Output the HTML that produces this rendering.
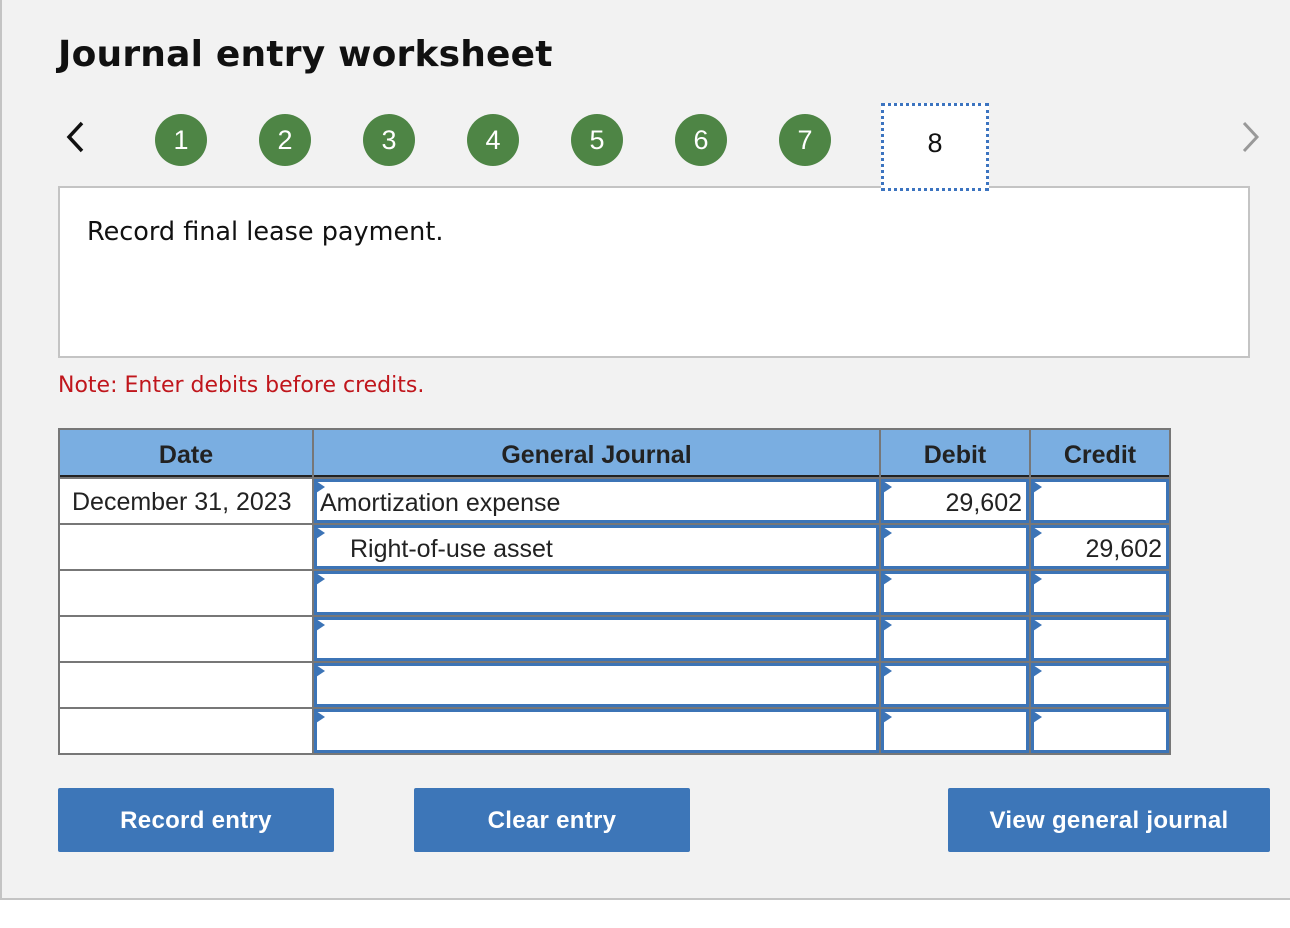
<!DOCTYPE html>
<html><head><style>
body{margin:0;width:1290px;height:928px;background:#fff;font-family:"Liberation Sans",sans-serif;position:relative;overflow:hidden}
.page{position:absolute;left:0;top:0;width:1290px;height:900px;background:#f2f2f2;border-left:2px solid #c4c4c4;border-bottom:2px solid #c4c4c4;box-sizing:border-box}
.abs{position:absolute}
h1{position:absolute;left:58px;top:34px;margin:0;font-family:"DejaVu Sans",sans-serif;font-size:36px;font-weight:bold;color:#111;letter-spacing:0.2px}
.c{position:absolute;top:114px;width:52px;height:52px;border-radius:50%;background:#4e8545;color:#fff;font-size:27px;text-align:center;line-height:53px}
.box8{position:absolute;z-index:2;left:881px;top:103px;width:108px;height:88px;box-sizing:border-box;border:3px dotted #3c74c0;background:#fff;text-align:center;line-height:74px;font-size:27px;color:#111}
.prompt{position:absolute;left:58px;top:186px;width:1192px;height:172px;box-sizing:border-box;border:2px solid #c4c4c4;background:#fff;font-family:"DejaVu Sans",sans-serif;font-size:25.5px;padding:29px 0 0 27px;color:#111}
.note{position:absolute;left:58px;top:373px;font-family:"DejaVu Sans",sans-serif;font-size:22px;color:#c0161c}
.tbl{position:absolute;left:58px;top:428px;width:1113px;height:327px;box-sizing:border-box;background:#777;padding:2px;display:grid;grid-template-columns:252px 565px 148px 138px;grid-template-rows:47px 44px 44px 44px 44px 44px 44px;gap:2px}
.h{background:#7aaee1;font-weight:bold;font-size:25px;color:#222;text-align:center;line-height:50px;border-bottom:2px solid #222}
.d{background:#fff;font-size:25px;color:#222;line-height:46px;padding-left:12px}
.i{background:#fff;border:3px solid #3c74b6;position:relative;font-size:25px;color:#222;line-height:42px;box-sizing:border-box}
.i::before{content:"";position:absolute;left:-1px;top:-1px;border-left:9px solid #3c74b6;border-top:6px solid transparent;border-bottom:6px solid transparent;width:0;height:0}
.r{text-align:right;padding-right:4px}
.btn{position:absolute;top:788px;height:64px;background:#3d76b8;color:#fff;font-weight:bold;font-size:24px;text-align:center;line-height:66px;border-radius:2px;letter-spacing:0.3px}
</style></head><body>
<div class="page"></div>
<h1>Journal entry worksheet</h1>
<svg class="abs" style="left:64px;top:120px" width="22" height="34"><path d="M18 3 L5 17 L18 31" stroke="#111" stroke-width="3.5" fill="none"/></svg>
<svg class="abs" style="left:1240px;top:120px" width="22" height="34"><path d="M4 3 L17 17 L4 31" stroke="#999" stroke-width="3" fill="none"/></svg>
<div class="c" style="left:155px">1</div>
<div class="c" style="left:259px">2</div>
<div class="c" style="left:363px">3</div>
<div class="c" style="left:467px">4</div>
<div class="c" style="left:571px">5</div>
<div class="c" style="left:675px">6</div>
<div class="c" style="left:779px">7</div>
<div class="box8">8</div>
<div class="prompt">Record final lease payment.</div>
<div class="note">Note: Enter debits before credits.</div>
<div class="tbl">
<div class="h">Date</div><div class="h">General Journal</div><div class="h">Debit</div><div class="h">Credit</div>
<div class="d">December 31, 2023</div><div class="i" style="padding-left:3px">Amortization expense</div><div class="i r">29,602</div><div class="i"></div>
<div class="d"></div><div class="i" style="padding-left:33px">Right-of-use asset</div><div class="i"></div><div class="i r">29,602</div>
<div class="d"></div><div class="i"></div><div class="i"></div><div class="i"></div>
<div class="d"></div><div class="i"></div><div class="i"></div><div class="i"></div>
<div class="d"></div><div class="i"></div><div class="i"></div><div class="i"></div>
<div class="d"></div><div class="i"></div><div class="i"></div><div class="i"></div>
</div>
<div class="btn" style="left:58px;width:276px">Record entry</div>
<div class="btn" style="left:414px;width:276px">Clear entry</div>
<div class="btn" style="left:948px;width:322px">View general journal</div>
</body></html>
